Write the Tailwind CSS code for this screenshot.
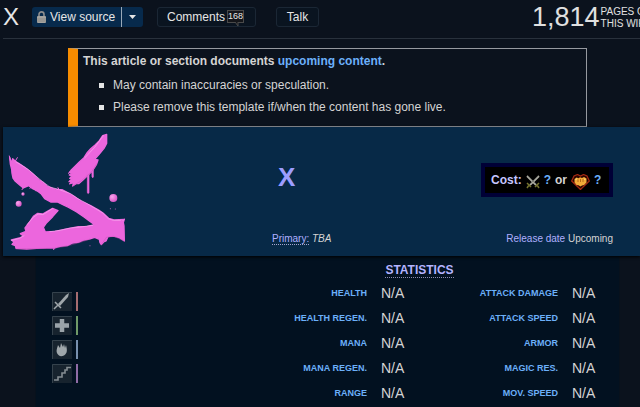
<!DOCTYPE html>
<html lang="en">
<head>
  <meta charset="UTF-8">
  <meta name="viewport" content="width=device-width, initial-scale=1.0">
  <title>X</title>
  <script src="https://cdn.jsdelivr.net/npm/@tailwindcss/browser@4"></script>
</head>
<body class="min-h-screen overflow-x-hidden bg-[#0b121d] font-['Liberation_Sans',Arial,sans-serif] text-xs text-[#d5d4d4]">
  <div class="flex min-h-screen flex-col pl-[3px]">

    <!-- PAGE HEADER -->
    <header class="flex h-[39px] items-start justify-between overflow-hidden border-b border-[#29313c]">
      <div class="flex items-start">
        <h1 class="w-[29px] pt-1 text-2xl leading-[26px] text-[#e6e6e6]">X</h1>
        <div class="mt-[7px] flex h-5 rounded-[3px] bg-[#072a4c] text-[#e6e6e6]">
          <button class="flex w-[89px] items-center gap-1 pl-[5px]">
            <svg class="h-3 w-[9px]" viewBox="0 0 9 12">
              <path d="M2 6V3.4a2.5 2.5 0 0 1 5 0V6" fill="none" stroke="#8d8d8d" stroke-width="1.6"/>
              <rect y="5" width="9" height="7" rx="1" fill="#a5a39f"/>
              <path d="M0 8h9M0 10h9" stroke="#84827f" stroke-width=".7"/>
            </svg>
            View source
          </button>
          <button class="flex w-[22px] items-center justify-center border-l border-[#9aa9b8]" aria-label="More">
            <svg class="h-1 w-[7px]" viewBox="0 0 7 4"><path d="M0 0h7L3.5 4z" fill="#e6e6e6"/></svg>
          </button>
        </div>
        <button class="mt-[7px] ml-[14px] flex h-5 w-[99px] items-center gap-[2px] rounded-[3px] border border-[#1b2735] bg-[#0a1420] pl-[9px] text-[#e6e6e6]">
          Comments
          <span class="relative mb-[2px] h-[13px] border border-[#4a4a4a] bg-[#15161a] text-[9px] leading-[11px]">168
            <svg class="absolute top-[11px] left-[7px] h-1 w-[6px]" viewBox="0 0 6 4"><path d="M0 0l3 4V0" fill="#15161a" stroke="#4a4a4a"/></svg>
          </span>
        </button>
        <button class="mt-[7px] ml-5 h-5 w-[43px] rounded-[3px] border border-[#1b2735] bg-[#0a1420] text-[#e6e6e6]">Talk</button>
      </div>
      <div class="flex w-[108px] shrink-0 items-start gap-px whitespace-nowrap text-[#e0e0e0]">
        <span class="pt-[2px] text-[27px] leading-[30px]">1,814</span>
        <span class="pt-[6px] text-[10px] leading-[12px]">PAGES ON<br>THIS WIKI</span>
      </div>
    </header>

    <!-- NOTICE -->
    <section class="mt-[9px] mr-[53px] ml-[65px] h-[79px] border border-l-[10px] border-[#96999f] border-l-[#f78c00] pt-[4px] pl-[5px]">
      <p class="leading-4 font-bold">This article or section documents <a href="#" class="text-[#6cb0fa]">upcoming content</a>.</p>
      <ul class="mt-[5px]">
        <li class="flex h-[22px] items-center gap-[9px] pl-4"><i class="size-[5px] bg-[#e4e4e4]"></i>May contain inaccuracies or speculation.</li>
        <li class="flex h-[22px] items-center gap-[9px] pl-4"><i class="size-[5px] bg-[#e4e4e4]"></i>Please remove this template if/when the content has gone live.</li>
      </ul>
    </section>

    <!-- CHAMPION BANNER -->
    <section class="relative flex h-[129px] bg-[#072947] pt-[6px] pr-[27px] pl-[5px] shadow-[0_1px_3px_#000]">
      <svg class="size-[117px] shrink-0" viewBox="24 39 351 351" role="img" aria-label="X">
        <defs>
          <radialGradient id="drop" cx=".35" cy=".35" r=".7">
            <stop offset="0" stop-color="#f9a5ee"/>
            <stop offset="1" stop-color="#d653c5"/>
          </radialGradient>
        </defs>
        <g fill="#ec66dd" stroke="#ec66dd" stroke-width="4" stroke-linejoin="round">
          <path d="M320 43L308 47 298 62 286 74 272 86 262 97 252 113 238 126 226 138 213 151 208 157 216 158 208 165 216 167 209 175 218 174 207 185 216 184 210 191 221 188 218 198 228 191 236 191 248 181 262 167 274 156 282 145 289 134 294 120 284 118 298 102 312 85 320 70z"/>
          <path d="M262 150v68q3 5 5 0v-71zM275 140l1 31q3 4 4 0v-40z" stroke-width="2"/>
          <path d="M29 112L35 130 38 116 46 124 56 130 74 142 86 151 100 163 118 180 130 188 142 199 160 206 174 209 186 209 200 216 222 229 244 244 272 257 296 270 309 279 326 295 342 300 373 298 370 308 372 318 373 363 358 353 340 348 324 350 318 363 311 366 304 374 300 368 298 358 284 352 268 357 252 360 238 366 218 369 202 377 180 379 162 384 140 384 110 385 80 387 48 385 46 377 36 373 42 366 34 360 58 354 70 348 61 341 78 334 75 324 90 304 100 289 113 280 128 282 142 274 158 265 174 272 158 290 140 308 130 322 136 336 165 334 200 327 235 320 262 319 284 314 270 304 252 291 230 276 206 262 190 255 172 246 152 246 134 236 124 222 112 213 98 206 86 197 70 204 60 196 46 184 39 174 36 160 35 148 31 132z"/>
        </g>
        <g fill="none" stroke-width="3" stroke-linejoin="round" stroke-linecap="round">
          <path d="M45 124l17 10 23 15 20 17 23 19 22 16 28 8 34 12 20 14 26 14 27 16 23 14 17 17 15 5h30M82 313l18-21 14-10 15 2 28-18M35 361l24-6 13-8M150 335l30-4 32-7 30-3 36-5M254 114l30-32 26-35" stroke="#fbb3f2" stroke-opacity=".6"/>
          <path d="M48 387l60-1 50-1 40-6 40-11 30-10M304 374l15-22 22-3 32 14M218 198l28-17 30-27 14-22" stroke="#b946a9" stroke-opacity=".35"/>
          <path d="M28 108l4 18M52 113l-7 12M208 192l12-10M205 160l14-8M174 203l4 7M66 209l8-12M90 205l6-8M375 297l-12 5M161 389l2-8M107 212l12 1" stroke="#ec66dd"/>
        </g>
        <g fill="url(#drop)">
          <circle cx="340" cy="234" r="12"/>
          <circle cx="56" cy="251" r="9"/>
          <circle cx="69" cy="222" r="5"/>
          <circle cx="331" cy="266" r="1.5"/>
          <circle cx="346" cy="267" r="1.5"/>
          <circle cx="270" cy="377" r="1.5"/>
        </g>
      </svg>
      <div class="flex grow justify-between pb-[11px] pl-[147px]">
        <div class="flex flex-col justify-between">
          <h2 class="mt-[29px] pl-[6px] text-[26px] leading-[30px] font-bold text-[#9d9dff]">X</h2>
          <p class="text-[10px] leading-3"><span class="border-b border-dotted border-[#a5a5d0] text-[#b0b0ff]">Primary:</span> <em>TBA</em></p>
        </div>
        <div class="flex flex-col items-end justify-between">
          <div class="mt-[30px] flex h-[34px] w-[132px] items-center gap-1 border-4 border-[#000036] bg-black pl-[6px] text-xs font-bold whitespace-nowrap">
            <span class="text-[#c6c6ff]">Cost:</span>
            <svg class="mt-1 size-[14px]" viewBox="0 0 14 14" fill="none">
              <path d="M1 1l9 9M13 1l-9 9" stroke="#aaa99f" stroke-width="1.8"/>
              <path d="M2 1l9 9M12 1l-9 9" stroke="#555850" stroke-width=".5"/>
              <path d="M1 8l4 4M13 8l-4 4M3 10l-2 3M11 10l2 3" stroke="#77752f" stroke-width="1.5"/>
            </svg>
            <a href="#" class="text-[#6cb0fa]">?</a>
            <span>or</span>
            <svg class="mt-1 h-4 w-[19px]" viewBox="0 0 19 16">
              <path d="M9.5 15.5L.7 7 3 2l3.5-1.5 3 1.5 3-1.5L16 2l2.3 5z" fill="#2a0500" stroke="#a52a12" stroke-width="1.2"/>
              <path d="M3.5 5l2-1.5 2 .8 1.5-1 2 .8 2-1 2.5 1.4v4l-2.5 2.5-2 .5-1.5 1-2-1.2-2-.3-2-2.5z" fill="#f4ac39"/>
              <path d="M7 5.5v2.5M9.5 5v3M12 5v3" stroke="#9f4f0f" stroke-width=".7"/>
              <path d="M4.5 5.5l1.5-.7M13 5l1.5.5" stroke="#ffe188"/>
            </svg>
            <a href="#" class="text-[#6cb0fa]">?</a>
          </div>
          <p class="text-[10px] leading-3"><span class="text-[#b0b0ff]">Release date</span> Upcoming</p>
        </div>
      </div>
    </section>

    <!-- STATISTICS -->
    <section class="mr-5 ml-8 flex grow justify-between border-x border-[#07111c] bg-[#021120]">
      <ul class="mt-[36px] ml-4 flex flex-col gap-[5px]">
        <li class="flex gap-1">
          <svg class="h-[19px] w-5 bg-[#17232e]" viewBox="0 0 20 19">
            <path d="M.5 19V.5H20" fill="none" stroke="#35424c"/>
            <path d="M17 1l-1 4-8 9-2-2 8-9z" fill="#a0a7ab"/>
            <path d="M3 10l6 6M6 13l-4 4" stroke="#a0a7ab" stroke-width="1.5"/>
          </svg>
          <i class="w-[2px] bg-[#a56c70]"></i>
        </li>
        <li class="flex gap-1">
          <svg class="h-[19px] w-5 bg-[#17232e]" viewBox="0 0 20 19">
            <path d="M.5 19V.5H20" fill="none" stroke="#35424c"/>
            <path d="M10 3v13M3 9.5h14" stroke="#9aa3a9" stroke-width="4.5"/>
          </svg>
          <i class="w-[2px] bg-[#709a68]"></i>
        </li>
        <li class="flex gap-1">
          <svg class="h-[19px] w-5 bg-[#17232e]" viewBox="0 0 20 19">
            <path d="M.5 19V.5H20" fill="none" stroke="#35424c"/>
            <path d="M7 15.5C3 12 5 9 6 5l2 3 1-5 2 4 1-3 1 4 1-3c1 4 2 8-2 10.5-2 1-4 1-5 0z" fill="#a0a7ab"/>
          </svg>
          <i class="w-[2px] bg-[#7890ae]"></i>
        </li>
        <li class="flex gap-1">
          <svg class="h-[19px] w-5 bg-[#17232e]" viewBox="0 0 20 19">
            <path d="M.5 19V.5H20" fill="none" stroke="#35424c"/>
            <path d="M2 16h4v-3h4v-4h3V6h2V3.5h4" fill="none" stroke="#858d92" stroke-width="1.6"/>
          </svg>
          <i class="w-[2px] bg-[#8f6ca5]"></i>
        </li>
      </ul>
      <div class="w-[399px]">
        <h3 class="pt-[6px] pb-[2px] text-center leading-[14px]"><span class="border-b border-dotted border-[#8a8aae] text-xs font-bold text-[#b4b4ff]">STATISTICS</span></h3>
        <table class="w-full table-fixed text-right">
          <colgroup><col class="w-[147px]"><col class="w-11"><col class="w-[147px]"><col></colgroup>
          <tbody class="text-[#6cb0fa] [&_td]:pl-[14px] [&_td]:text-left [&_td]:text-sm [&_td]:leading-[20px] [&_td]:text-[#d5d4d4] [&_th]:text-[9px] [&_tr]:h-[25px]">
            <tr><th>HEALTH</th><td>N/A</td><th>ATTACK DAMAGE</th><td>N/A</td></tr>
            <tr><th>HEALTH REGEN.</th><td>N/A</td><th>ATTACK SPEED</th><td>N/A</td></tr>
            <tr><th>MANA</th><td>N/A</td><th>ARMOR</th><td>N/A</td></tr>
            <tr><th>MANA REGEN.</th><td>N/A</td><th>MAGIC RES.</th><td>N/A</td></tr>
            <tr><th>RANGE</th><td>N/A</td><th>MOV. SPEED</th><td>N/A</td></tr>
          </tbody>
        </table>
      </div>
    </section>
  </div>
</body>
</html>
